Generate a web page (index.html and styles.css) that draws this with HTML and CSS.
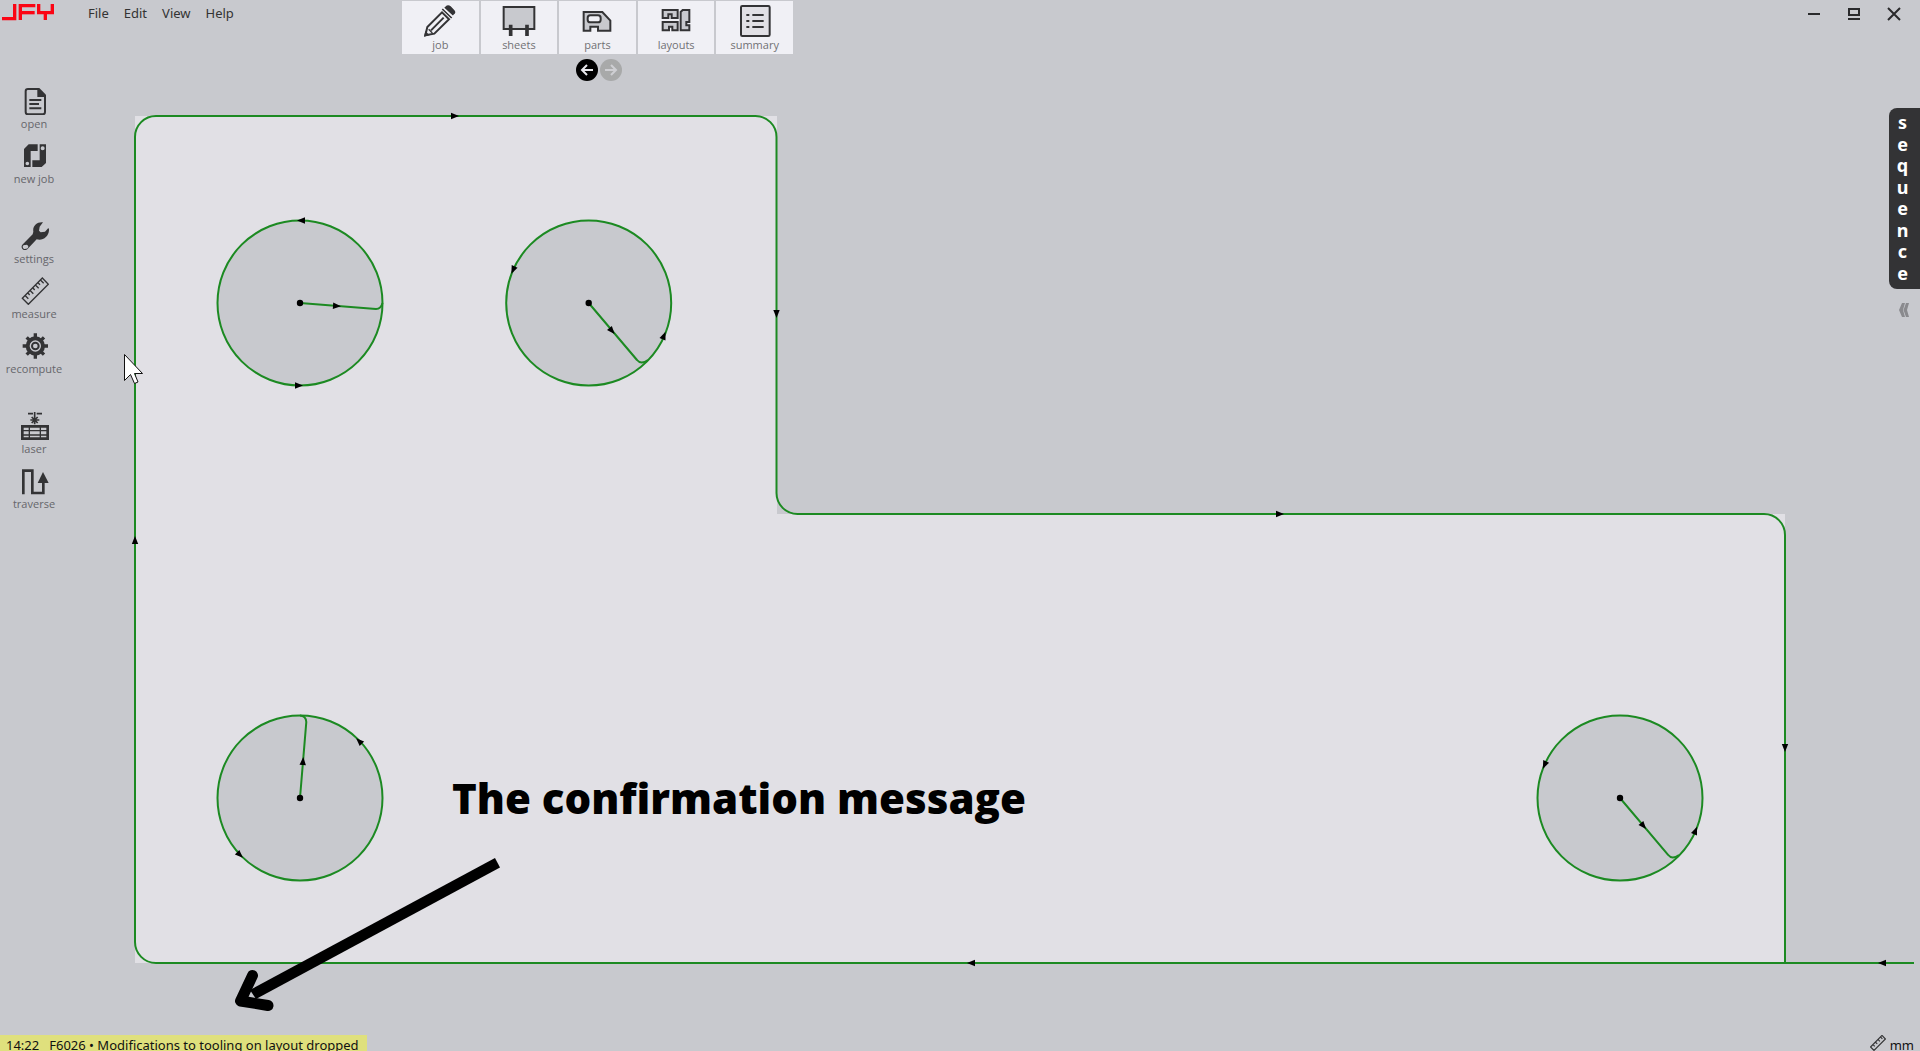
FILE: index.html
```html
<!DOCTYPE html>
<html lang="en">
<head>
<meta charset="utf-8">
<title>JFY layout tooling</title>
<link rel="stylesheet" href="styles.css">
</head>
<body>
<div class="app">
  <svg class="canvas" viewBox="0 0 1920 1051" role="img" aria-label="Part with cutting path">
    <defs>
      <path id="dir" d="M-4-3.2 4 0-4 3.2Z"/>
    </defs>
    <path class="part" d="M135 116H777V514H1785V963H135Z"/>
    <g class="hole">
      <circle cx="300" cy="303" r="82.5"/>
      <circle cx="588.7" cy="303" r="82.5"/>
      <circle cx="300" cy="798" r="82.5"/>
      <circle cx="1620" cy="798" r="82.5"/>
    </g>
    <g id="cuts">
      <path class="cut" d="M1914 963H156A21 21 0 0 1 135 942V137A21 21 0 0 1 156 116H755.500A21 21 0 0 1 776.500 137V493A21 21 0 0 0 797.500 514H1764A21 21 0 0 1 1785 535V963"/>
      <path class="cut" d="M300 303 376 309Q381 309 382.500 303"/>
      <path class="cut" d="M588.700 303 637 360Q641 365 648 360"/>
      <path class="cut" d="M300 798 306.300 722Q306 716 300 715.500"/>
      <path class="cut" d="M1620 798 1668.300 855Q1672 860 1679 855"/>
    </g>
    <g class="ink">
      <circle cx="300" cy="303" r="3.200"/>
      <circle cx="588.700" cy="303" r="3.200"/>
      <circle cx="300" cy="798" r="3.200"/>
      <circle cx="1620" cy="798" r="3.200"/>
      <use href="#dir" transform="translate(455 116)"/>
      <use href="#dir" transform="translate(776.500 314) rotate(90)"/>
      <use href="#dir" transform="translate(1280 514)"/>
      <use href="#dir" transform="translate(1785 748) rotate(90)"/>
      <use href="#dir" transform="translate(1882 963) rotate(180)"/>
      <use href="#dir" transform="translate(971 963) rotate(180)"/>
      <use href="#dir" transform="translate(135 540) rotate(-90)"/>
      <use href="#dir" transform="translate(301 220.500) rotate(180)"/>
      <use href="#dir" transform="translate(299 385.500)"/>
      <use href="#dir" transform="translate(337 306) rotate(4)"/>
      <use href="#dir" transform="translate(513 270) rotate(114)"/>
      <use href="#dir" transform="translate(664 335.500) rotate(-68)"/>
      <use href="#dir" transform="translate(612 331) rotate(50)"/>
      <use href="#dir" transform="translate(303 761) rotate(-86)"/>
      <use href="#dir" transform="translate(359 741) rotate(-136)"/>
      <use href="#dir" transform="translate(240 855) rotate(44)"/>
      <use href="#dir" transform="translate(1544.500 765) rotate(114)"/>
      <use href="#dir" transform="translate(1695.500 830.500) rotate(-68)"/>
      <use href="#dir" transform="translate(1643.500 826) rotate(50)"/>
    </g>
    <text class="callout" x="452" y="814">The confirmation message</text>
    <path class="ink" d="M495 858 500 867.500 256 999 250 990Z"/>
    <path class="callout-head" d="M252.500 975.500 240.500 1001 268 1005.500"/>
    <path class="cursor" d="M124.500 354.500V380.500L130.500 374.500 134.500 383.500 138 382 134.500 373.500H142.500Z"/>
  </svg>

  <header class="topbar">
    <div class="brand">
      <svg class="logo" viewBox="0 0 168 66" role="img" aria-label="JFY">
        <polyline points="6,56 44,56 44,12"/>
        <polyline points="61,60 61,17 106,17"/>
        <polyline points="61,38 104,38"/>
        <polyline points="116,12 116,38 157,38 157,12"/>
        <polyline points="136,38 136,60"/>
      </svg>
      <nav class="menu">
        <button type="button">File</button>
        <button type="button">Edit</button>
        <button type="button">View</button>
        <button type="button">Help</button>
      </nav>
    </div>
    <div class="center">
      <nav class="tabs">
        <button type="button">
          <svg viewBox="101 12 102 102"><path class="line" d="M108 106 114 81 158 37 179 58 135 101ZM125 91 163 53" stroke-width="6"/><path class="line" d="M118 88 129 99" stroke-width="4"/><path class="fill" d="M104 110 108 93 121 106ZM168 20Q176 12 184 19L194 29Q202 37 194 43L190 47 164 24Z"/><path class="line" d="M159 27 187 54" stroke-width="5"/><path class="gap" d="M163 24 191 50"/></svg>
          <span>job</span>
        </button>
        <button type="button">
          <svg viewBox="336 12 102 102"><path class="shape" d="M341 21H433V87H341Z"/><path class="line" d="M362 74V108M411 74V108" stroke-width="11"/></svg>
          <span>sheets</span>
        </button>
        <button type="button">
          <svg viewBox="571 12 102 102"><path class="shape" d="M582 36H638L662 62V92H625V80H602V92H582Z"/><rect class="shape light" x="594" y="46" width="39" height="21" rx="8"/></svg>
          <span>parts</span>
        </button>
        <button type="button">
          <svg viewBox="807 12 102 102"><path class="shape" d="M818 30H863V54H845V43H835V54H818ZM818 66H863V91H847V80H837V91H818ZM878 30H898V66H889V76H898V91H872V36Z"/></svg>
          <span>layouts</span>
        </button>
        <button type="button">
          <svg viewBox="1042 12 102 102"><rect class="shape pale" x="1051" y="18" width="86" height="90" rx="4"/><path class="line" d="M1085 45H1119M1085 63H1119M1085 81H1119M1067 45H1076M1067 63H1076M1067 81H1076" stroke-width="6"/></svg>
          <span>summary</span>
        </button>
      </nav>
      <div class="history">
        <button type="button" aria-label="Back"><svg viewBox="0 0 22 22"><circle cx="11" cy="11" r="11"/><path d="M17 11H6M11 6 6 11 11 16"/></svg></button>
        <button type="button" aria-label="Forward" disabled><svg viewBox="0 0 22 22"><circle cx="11" cy="11" r="11"/><path d="M5 11H16M11 6 16 11 11 16"/></svg></button>
      </div>
    </div>
    <div class="window-controls">
      <button type="button" aria-label="Minimize"><svg viewBox="0 0 14 14"><path d="M1 7H13"/></svg></button>
      <button type="button" aria-label="Restore"><svg viewBox="0 0 14 14"><path d="M2 2H12V8H2ZM1 12H13"/></svg></button>
      <button type="button" aria-label="Close"><svg viewBox="0 0 14 14"><path d="M1 1 13 13M13 1 1 13"/></svg></button>
    </div>
  </header>

  <main class="workspace">
    <aside class="tools">
      <div class="tool-group">
        <button type="button">
          <svg viewBox="57 261 90 84"><path class="line" d="M114 267H84Q77 267 77 274V336Q77 343 84 343H128Q135 343 135 336V288" stroke-width="6"/><path class="fill" d="M112 264H118L138 284V291H112Z"/><path class="line" d="M88 300H124M88 312H117M88 325H124" stroke-width="6"/></svg>
          <span>open</span>
        </button>
        <button type="button">
          <svg viewBox="57 428 90 84"><path class="fill" fill-rule="evenodd" d="M86 435H113V455H92V503H72V449ZM82 487A5 5 0 1 0 82 498 5 5 0 1 0 82 487ZM119 435H138V491L125 503H97V483H119ZM128 441A5 5 0 1 0 128 453 5 5 0 1 0 128 441Z"/></svg>
          <span>new job</span>
        </button>
      </div>
      <div class="tool-group">
        <button type="button">
          <svg viewBox="57 68 90 84"><path class="fill" fill-rule="evenodd" d="M129 69C111 67 97 80 100 97L98 105 67 136C61 143 68 153 76 153L82 150 110 120C128 126 148 111 147 90L145 86 135 97 122 99 117 94 119 82ZM76 137A6 6 0 1 0 77 148 6 6 0 1 0 76 137Z"/></svg>
          <span>settings</span>
        </button>
        <button type="button">
          <svg viewBox="57 233 90 84"><path class="line" d="M67 297 127 236 145 255 85 315ZM76 289 85 298M84 281 89 287M91 274 100 283M99 266 104 272M107 258 116 267M114 250 120 256M122 243 131 252" stroke-width="4"/></svg>
          <span>measure</span>
        </button>
        <button type="button">
          <svg viewBox="57 397 90 84"><circle class="line" cx="106" cy="439" r="23" stroke-width="12"/><circle class="line" cx="106" cy="439" r="10" stroke-width="6"/><path class="line" d="M106 401V415M106 463V477M68 439H82M130 439H144M80 413 90 423M122 455 132 465M132 413 122 423M90 455 80 465" stroke-width="10"/></svg>
          <span>recompute</span>
        </button>
      </div>
      <div class="tool-group">
        <button type="button">
          <svg viewBox="57 69 90 84"><path class="line" d="M84 74H99M110 74H126M104 69V106M91 93H118M95 84 113 102M113 84 95 102" stroke-width="5"/><path class="line" d="M67 112H143V149H67Z" stroke-width="8"/><path class="line" d="M67 125H143M67 138H143M88 110V150M121 110V150" stroke-width="4"/></svg>
          <span>laser</span>
        </button>
        <button type="button">
          <svg viewBox="57 233 90 84"><path class="line" d="M70 315V244H97V311H130V278" stroke-width="8"/><path class="fill" d="M129 248 146 281H113Z"/></svg>
          <span>traverse</span>
        </button>
      </div>
    </aside>
    <aside class="side">
      <button type="button" class="sequence" aria-label="sequence"><span>s</span><span>e</span><span>q</span><span>u</span><span>e</span><span>n</span><span>c</span><span>e</span></button>
      <button type="button" class="expand" aria-label="Expand panel"><svg viewBox="0 0 10 14"><path d="M3 0H6L4 7 6 14H3L0 7ZM7 0H10L8 7 10 14H7L4.500 7Z"/></svg></button>
    </aside>
  </main>

  <footer class="statusbar">
    <p class="message"><time>14:22</time><span>F6026 • Modifications to tooling on layout dropped</span></p>
    <button type="button" class="units"><svg viewBox="64 234 84 84"><path class="line" d="M67 297 127 236 145 255 85 315ZM80 285 89 294M93 272 102 281M107 258 116 267M120 245 129 254" stroke-width="6"/></svg>mm</button>
  </footer>
</div>
</body>
</html>
```
FILE: styles.css
```css
:root {
  --surface: #c8c9ce;
  --part: #e1e0e5;
  --icon: #333335;
  --label: #66666b;
  --cut: #1c8a22;
}

* {
  box-sizing: border-box;
}

body {
  margin: 0;
  background: var(--surface);
  font-family: "Noto Sans", "Open Sans", sans-serif;
  font-size: 13px;
  color: #333;
}

button {
  padding: 0;
  border: 0;
  background: none;
  font: inherit;
  color: inherit;
}

svg {
  display: block;
}

.app {
  position: relative;
  display: flex;
  flex-direction: column;
  height: 100vh;
  overflow: hidden;
}

/* Drawing area, underneath the toolbars */
.canvas {
  position: absolute;
  inset: 0;
  width: 100%;
  height: 100%;
}

.part { fill: var(--part); }
.hole { fill: var(--surface); stroke: var(--cut); stroke-width: 2; }
.cut { fill: none; stroke: var(--cut); stroke-width: 2; }
.ink { fill: #000; }

.callout {
  font-family: "Open Sans", sans-serif;
  font-size: 42px;
  font-weight: 800;
  fill: #000;
}

.callout-head {
  fill: none;
  stroke: #000;
  stroke-width: 11;
  stroke-linecap: round;
  stroke-linejoin: round;
}

.cursor {
  fill: #fff;
  stroke: #111;
}

/* Icons */
.line { fill: none; stroke: var(--icon); }
.fill { fill: var(--icon); }
.shape { fill: var(--surface); stroke: var(--icon); stroke-width: 6; }
.shape.light { fill: #f0f0f5; }
.shape.pale { fill: #e1e0e5; }
.gap { fill: none; stroke: #f0f0f5; stroke-width: 4; }

/* Top bar */
.topbar {
  position: relative;
  display: grid;
  grid-template-columns: 402px 391px 1fr;
  align-items: start;
}

.brand {
  display: flex;
  align-items: flex-start;
}

.logo {
  width: 56px;
  height: 22px;
  fill: none;
  stroke: #fb0514;
  stroke-width: 10;
}

.menu {
  display: flex;
  gap: 15px;
  padding-left: 32px;
  line-height: 26px;
}

.center {
  display: flex;
  flex-direction: column;
  gap: 5px;
  padding-top: 1px;
}

.tabs {
  display: grid;
  grid-template-columns: repeat(5, 1fr);
  gap: 2px;
  font-family: "Open Sans", "Noto Sans", sans-serif;
  font-size: 11px;
}

.tabs button {
  display: flex;
  flex-direction: column;
  align-items: center;
  height: 53px;
  padding-top: 3px;
  background: #f0f0f5;
  color: #707074;
}

.tabs svg {
  width: 34px;
  height: 34px;
}

.tabs span {
  line-height: 14px;
}

.history {
  display: flex;
  justify-content: center;
  gap: 2px;
  padding-left: 2px;
}

.history svg {
  width: 22px;
  height: 22px;
  fill: #000;
}

.history path {
  fill: none;
  stroke: #e8e8ec;
  stroke-width: 2;
}

.history :disabled svg {
  fill: #a8a9a9;
}

.history :disabled path {
  stroke: #cfcfd3;
}

.window-controls {
  display: flex;
  justify-content: flex-end;
  gap: 26px;
  padding: 7px 19px 0 0;
}

.window-controls svg {
  width: 14px;
  height: 14px;
  fill: none;
  stroke: #2a2a2c;
  stroke-width: 2;
}

/* Workspace */
.workspace {
  position: relative;
  flex: 1;
  display: flex;
  justify-content: space-between;
  align-items: flex-start;
}

.tools {
  display: flex;
  flex-direction: column;
  gap: 34px;
  width: 68px;
  padding-top: 6px;
  font-family: "Open Sans", "Noto Sans", sans-serif;
  font-size: 11px;
}

.tool-group {
  display: flex;
  flex-direction: column;
  gap: 9px;
}

.tool-group button {
  display: flex;
  flex-direction: column;
  align-items: center;
  color: var(--label);
}

.tool-group svg {
  width: 30px;
  height: 28px;
}

.tool-group span {
  line-height: 18px;
}

.side {
  display: flex;
  flex-direction: column;
  align-items: flex-end;
  gap: 14px;
  padding-top: 27px;
}

.sequence {
  display: grid;
  grid-template-rows: repeat(8, 1fr);
  width: 31px;
  height: 181px;
  padding: 4px 4px 5px 0;
  border-radius: 8px 0 0 8px;
  background: #333335;
  color: #fff;
  font-size: 18px;
  font-weight: 700;
  line-height: 21px;
}

.expand {
  padding-right: 11px;
}

.expand svg {
  width: 10px;
  height: 14px;
  fill: #8a8a8e;
}

/* Status bar */
.statusbar {
  position: relative;
  display: flex;
  justify-content: space-between;
  height: 16px;
  line-height: 20px;
  color: #111;
}

.message {
  display: flex;
  gap: 10px;
  margin: 0;
  padding: 0 8px 0 6px;
  background: #dfe07d;
}

.units {
  display: flex;
  gap: 4px;
  padding-right: 6px;
}

.units svg {
  width: 16px;
  height: 16px;
}
```
